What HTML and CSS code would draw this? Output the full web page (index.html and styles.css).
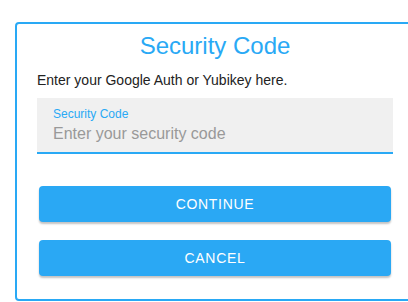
FILE: index.html
```html
<!DOCTYPE html>
<html lang="en">
<head>
    <meta charset="UTF-8">
    <meta name="viewport" content="width=device-width, initial-scale=1.0">
    <title>Security Code</title>
    <link rel="stylesheet" href="styles.css">
</head>
<body>
    <div class="card">
        <h1>Security Code</h1>
        <p class="hint">Enter your Google Auth or Yubikey here.</p>
        <div class="field">
            <label for="codeInput">Security Code</label>
            <input type="text" id="codeInput" placeholder="Enter your security code">
        </div>
        <div class="actions">
            <button class="btn">CONTINUE</button>
            <button class="btn">CANCEL</button>
        </div>
    </div>
</body>
</html>
```

FILE: styles.css
```css
/* styles.css */
body {
    font-family: "Liberation Sans", Arial, sans-serif;
    color: #222;
    background-color: #fff;
    margin: 0;
    padding: 22px 0 0 15px;
    overflow: hidden;
}

.card {
    box-sizing: border-box;
    width: 400px;
    border: 2px solid #29a9f5;
    border-radius: 4px;
    padding: 8px 20px 23px 20px;
}

h1 {
    margin: 0;
    font-size: 24px;
    line-height: 28px;
    font-weight: normal;
    color: #29a9f5;
    text-align: center;
}

.hint {
    margin: 12px 0 0 0;
    font-size: 14px;
    line-height: 16px;
}

.field {
    margin-top: 10px;
    background-color: #f0f0f0;
    border-bottom: 2px solid #29a9f5;
    padding: 9px 16px 9px 16px;
}

label {
    display: block;
    font-size: 12px;
    line-height: 14px;
    color: #29a9f5;
    margin-bottom: 4px;
}

input[type="text"] {
    display: block;
    width: 100%;
    border: none;
    background: transparent;
    padding: 0;
    margin: 0;
    font-family: inherit;
    font-size: 16px;
    line-height: 18px;
    height: 18px;
    color: #222;
    outline: none;
}

input::placeholder {
    color: #999;
}

.actions {
    display: flex;
    flex-direction: column;
    gap: 18px;
    margin: 32px 2px 0 2px;
}

.btn {
    height: 36px;
    background-color: #2aa8f4;
    color: #fff;
    border: none;
    border-radius: 4px;
    font-family: inherit;
    font-size: 14px;
    letter-spacing: 0.7px;
    box-shadow: 0 2px 2px rgba(0, 0, 0, 0.24);
    cursor: pointer;
}
```
